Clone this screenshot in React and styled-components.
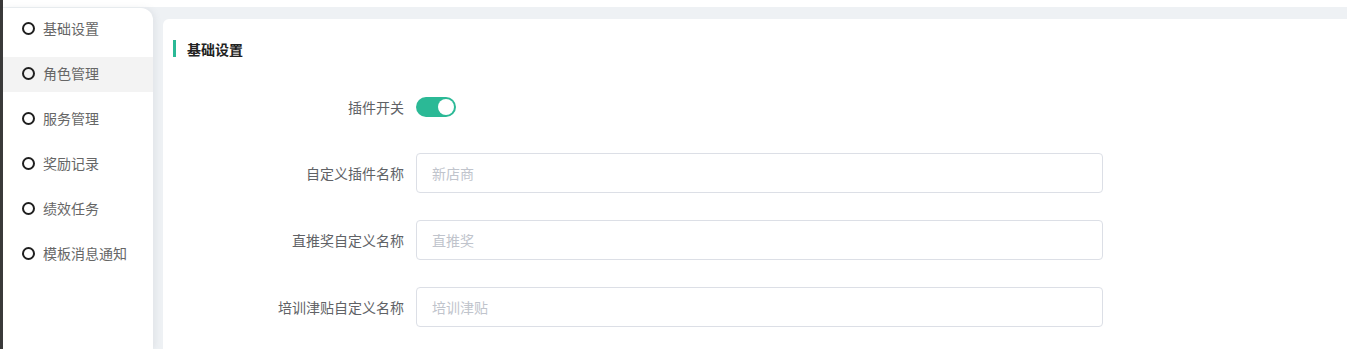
import React from 'react'
import styled, { createGlobalStyle } from 'styled-components'

// --- Data ---
const menuItems = ['基础设置', '角色管理', '服务管理', '奖励记录', '绩效任务', '模板消息通知']

const fields = [
  { label: '自定义插件名称', placeholder: '新店商' },
  { label: '直推奖自定义名称', placeholder: '直推奖' },
  { label: '培训津贴自定义名称', placeholder: '培训津贴' },
]

// --- App ---
const App = () => {
  return (
    <>
      <GlobalStyle />
      <Page>
        <TopStrip />
        <Body>
          <Sidebar>
            {menuItems.map((item, i) => (
              <MenuItem key={item} $active={i === 1}>
                <Dot />
                <span>{item}</span>
              </MenuItem>
            ))}
          </Sidebar>
          <Main>
            <Card>
              <SectionTitle>基础设置</SectionTitle>
              <Form>
                <SwitchRow>
                  <Label>插件开关</Label>
                  <Switch $on>
                    <Knob />
                  </Switch>
                </SwitchRow>
                {fields.map(f => (
                  <FieldRow key={f.label}>
                    <Label>{f.label}</Label>
                    <Input placeholder={f.placeholder} />
                  </FieldRow>
                ))}
              </Form>
            </Card>
          </Main>
        </Body>
      </Page>
    </>
  )
}

export default App

// --- Styles ---
const GlobalStyle = createGlobalStyle`
  html, body {
    margin: 0;
    padding: 0;
    height: 100%;
    overflow: hidden;
  }
  body {
    font-family: "Noto Sans CJK SC", "Noto Sans", sans-serif;
    background: #fff;
  }
  #root { height: 100%; }
  * { box-sizing: border-box; }
`

const Page = styled.div`
  height: 349px;
  display: flex;
  flex-direction: column;
  border-left: 3px solid #393939;
`

const TopStrip = styled.div`
  height: 7px;
  background: #fff;
  flex-shrink: 0;
`

const Body = styled.div`
  flex: 1;
  display: flex;
  background: #eef1f4;
  min-height: 0;
`

const Sidebar = styled.aside`
  width: 150px;
  flex-shrink: 0;
  margin-top: 1px;
  background: #fff;
  border-top-right-radius: 12px;
  padding-top: 4px;
  display: flex;
  flex-direction: column;
  gap: 10px;
  box-shadow: 2px 0 6px rgba(120, 130, 150, 0.12);
  position: relative;
  z-index: 1;
`

const MenuItem = styled.div`
  height: 35px;
  display: flex;
  align-items: center;
  padding: 0 0 4px 19px;
  gap: 8px;
  font-size: 14px;
  color: #666;
  background: ${p => (p.$active ? '#f3f3f3' : 'transparent')};
  cursor: pointer;
`

const Dot = styled.i`
  width: 13px;
  height: 13px;
  margin-top: 2px;
  border-radius: 50%;
  border: 2px solid #1f1f1f;
  flex-shrink: 0;
`

const Main = styled.main`
  flex: 1;
  padding: 12px 0 0 10px;
  min-width: 0;
`

const Card = styled.section`
  height: 100%;
  background: #fff;
  border-radius: 6px 0 0 0;
  padding: 21px 0 0 10px;
`

const SectionTitle = styled.h3`
  margin: 0;
  height: 17px;
  display: flex;
  align-items: center;
  border-left: 3px solid #2bb996;
  padding-left: 11px;
  font-size: 14px;
  font-weight: bold;
  color: #222;
`

const Form = styled.div`
  margin-top: 40px;
  display: flex;
  flex-direction: column;
  gap: 27px;
`

const Row = styled.div`
  display: flex;
  align-items: center;
`

const SwitchRow = styled(Row)`
  height: 20px;
  margin-bottom: 9px;
`

const FieldRow = styled(Row)`
  height: 40px;
`

const Label = styled.label`
  width: 243px;
  padding-right: 12px;
  text-align: right;
  font-size: 14px;
  color: #606266;
  flex-shrink: 0;
`

const Switch = styled.span`
  width: 40px;
  height: 20px;
  border-radius: 10px;
  background: ${p => (p.$on ? '#2bb996' : '#dcdfe6')};
  display: flex;
  align-items: center;
  justify-content: ${p => (p.$on ? 'flex-end' : 'flex-start')};
  padding: 0 2px;
  cursor: pointer;
`

const Knob = styled.span`
  width: 16px;
  height: 16px;
  border-radius: 50%;
  background: #fff;
`

const Input = styled.input`
  width: 687px;
  height: 40px;
  border: 1px solid #dcdfe6;
  border-radius: 4px;
  padding: 0 15px;
  font-size: 14px;
  font-family: inherit;
  color: #606266;
  outline: none;
  &::placeholder {
    color: #c0c4cc;
  }
`
